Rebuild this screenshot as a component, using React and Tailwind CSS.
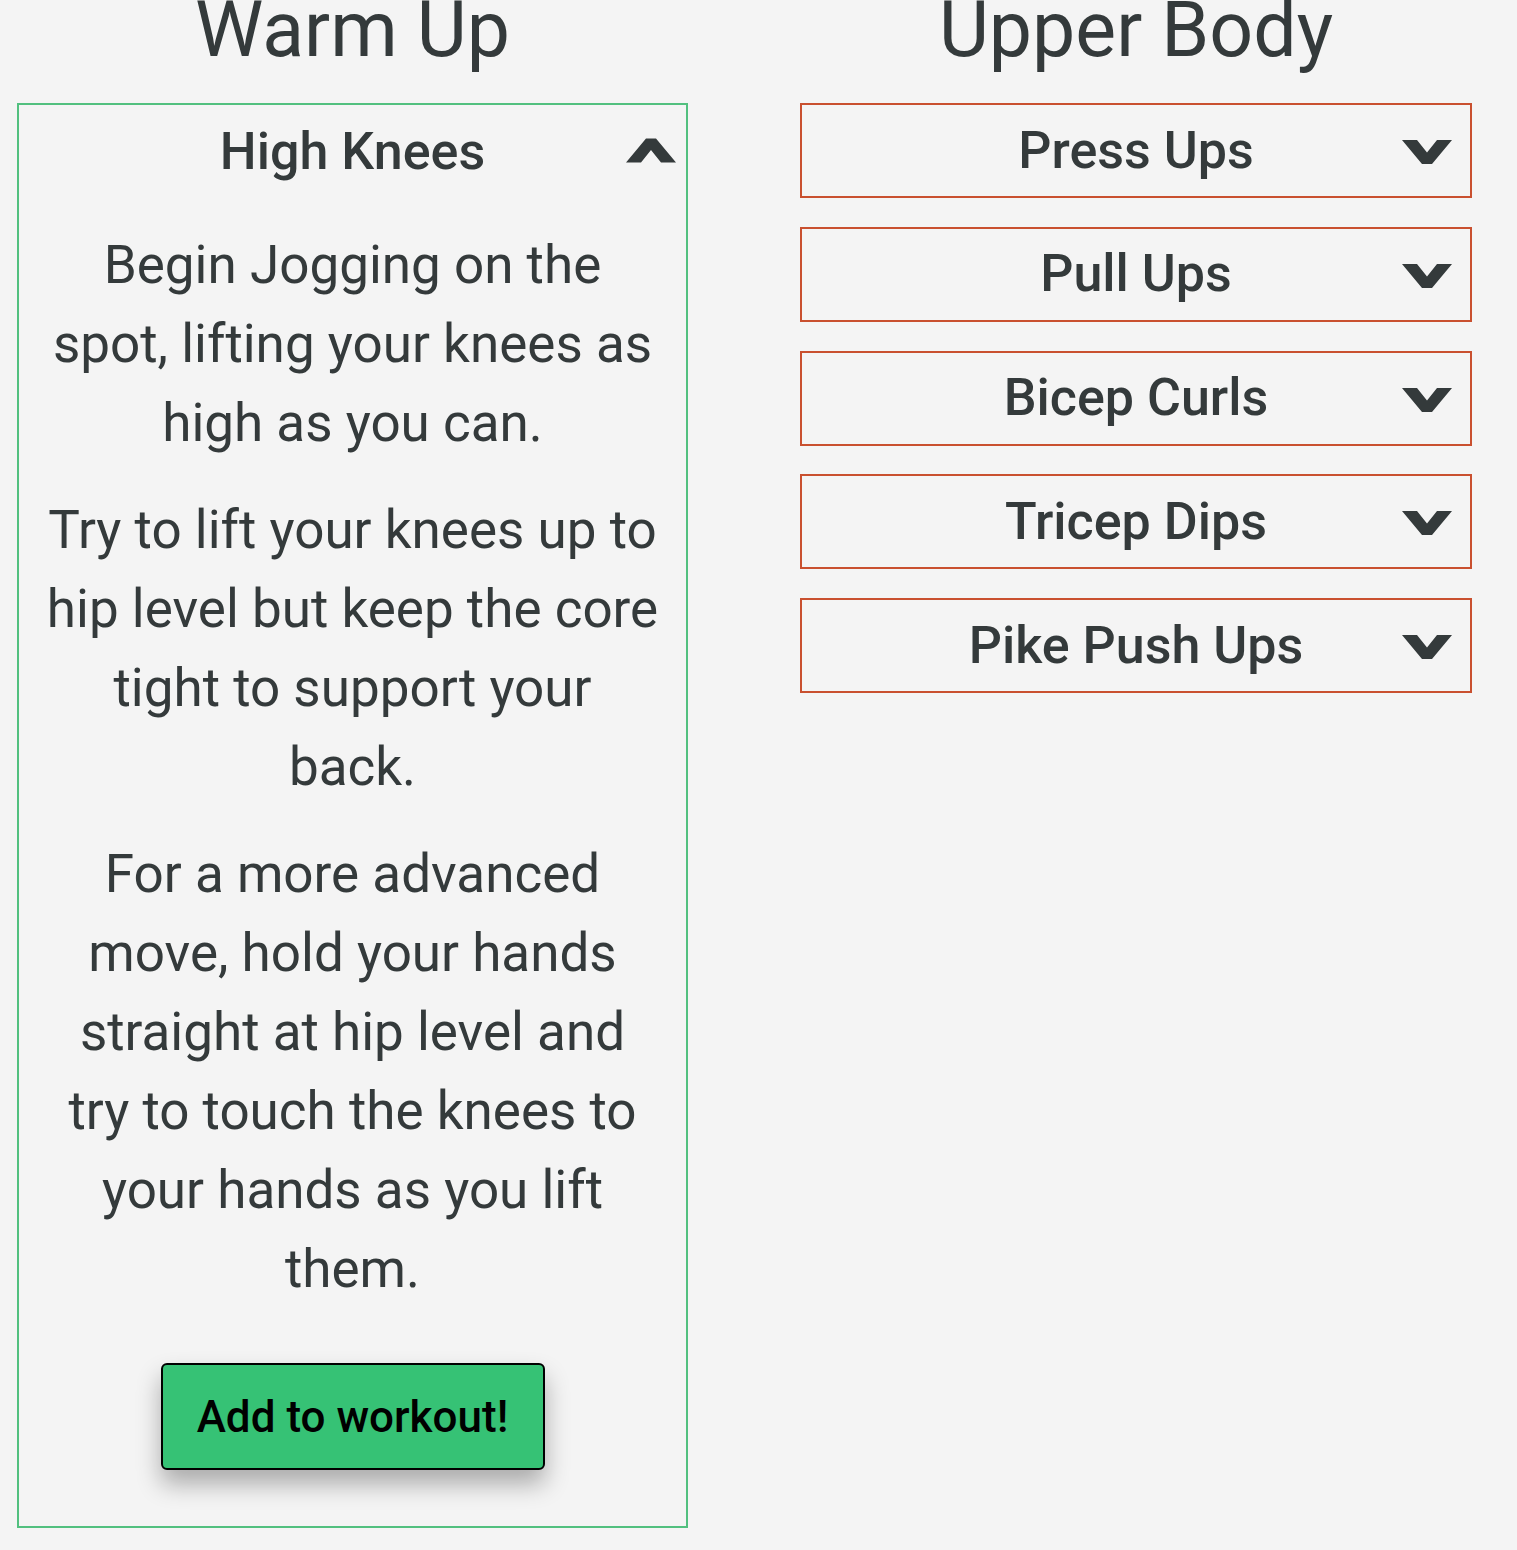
import { useState } from "react";

const warmUp = {
  name: "High Knees",
  steps: [
    "Begin Jogging on the spot, lifting your knees as high as you can.",
    "Try to lift your knees up to hip level but keep the core tight to support your back.",
    "For a more advanced move, hold your hands straight at hip level and try to touch the knees to your hands as you lift them.",
  ],
};

const upperBody = ["Press Ups", "Pull Ups", "Bicep Curls", "Tricep Dips", "Pike Push Ups"];

function Chevron({ up = false }) {
  return (
    <svg
      viewBox="0 0 50 24"
      className={up ? "h-[25px] w-[50px] rotate-180" : "h-[24px] w-[50px]"}
      fill="#343a3b"
    >
      <polygon points="0,0 15,0 25,12.5 35,0 50,0 30,24 20,24" />
    </svg>
  );
}

export default function App() {
  const [open, setOpen] = useState(true);

  return (
    <main className="min-h-screen bg-[#f4f4f4] font-['Roboto',sans-serif] text-[#343a3b]">
      <div className="flex items-start pl-[17px]">
        <section className="w-[671px]">
          <h2 className="-mt-2 mb-[34px] text-center text-[77px] leading-none font-normal">Warm Up</h2>
          <div className="border-2 border-[#52c07f]">
            <button
              onClick={() => setOpen(!open)}
              className="relative flex h-[93px] w-full items-center justify-center text-[52px] font-medium"
            >
              {warmUp.name}
              <span className="absolute right-[10px] top-[33px]">
                <Chevron up={open} />
              </span>
            </button>
            {open && (
              <div className="px-[27px] pt-[28px] pb-[56px] text-center">
                <div className="flex flex-col gap-[28px] text-[53px] leading-[79px]">
                  {warmUp.steps.map((s) => (
                    <p key={s}>{s}</p>
                  ))}
                </div>
                <button className="mt-[54px] h-[107px] w-[384px] rounded-[6px] border-2 border-black bg-[#36c275] text-[44px] font-medium text-black shadow-[0_14px_24px_rgba(0,0,0,0.3)]">
                  Add to workout!
                </button>
              </div>
            )}
          </div>
        </section>

        <section className="ml-[112px] w-[672px]">
          <h2 className="-mt-2 mb-[34px] text-center text-[77px] leading-none font-normal">Upper Body</h2>
          <div className="flex flex-col gap-[28.75px]">
            {upperBody.map((name) => (
              <button
                key={name}
                className="relative flex h-[95px] w-full items-center justify-center border-2 border-[#c9502f] text-[52px] font-medium"
              >
                {name}
                <span className="absolute right-[18px] top-[35px]">
                  <Chevron />
                </span>
              </button>
            ))}
          </div>
        </section>
      </div>
    </main>
  );
}
